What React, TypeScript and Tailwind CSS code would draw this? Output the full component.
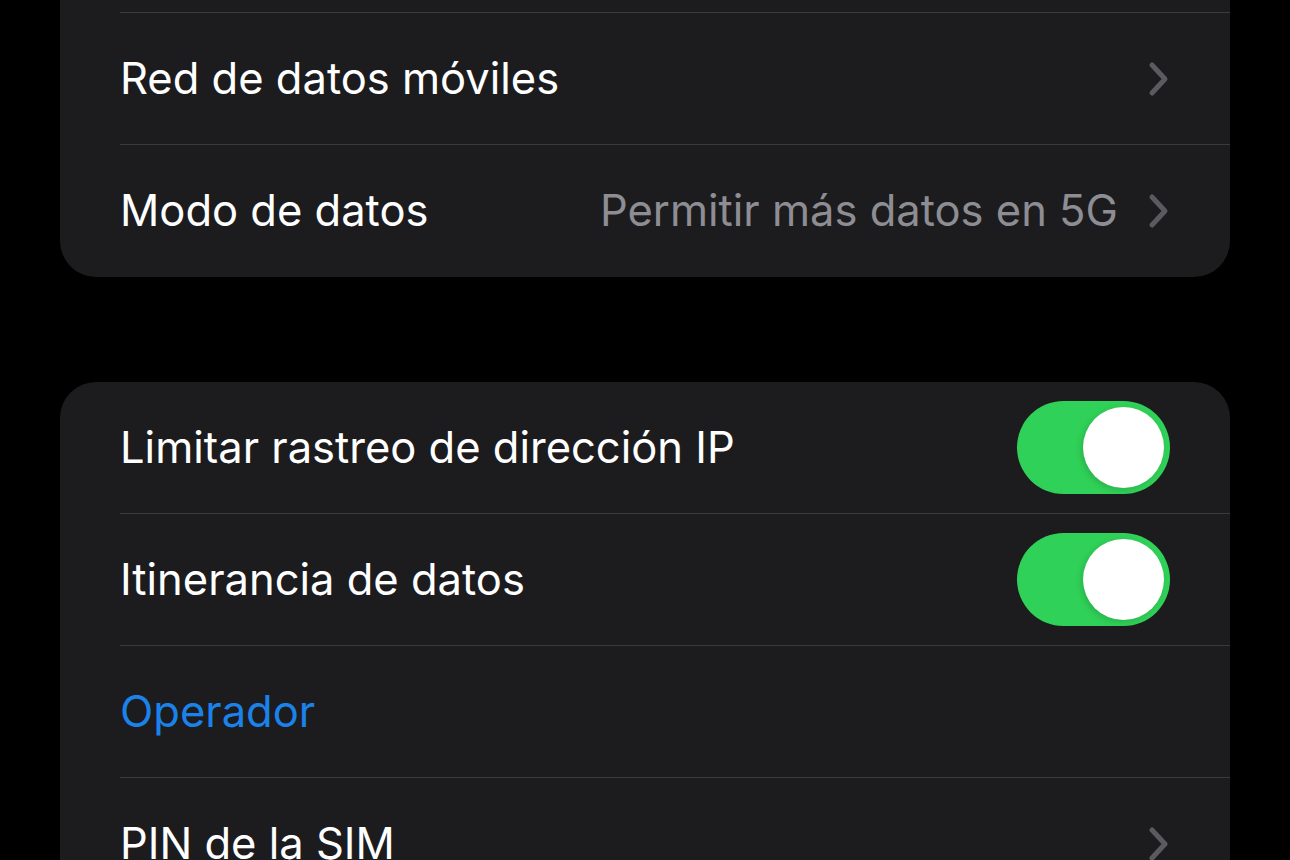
import React from "react";

const Chevron = () => (
  <svg width="22" height="36" viewBox="0 0 22 36" className="shrink-0">
    <path d="M4 4 L17 18 L4 32" fill="none" stroke="#5a5a5f" strokeWidth="5" strokeLinecap="round" strokeLinejoin="round" />
  </svg>
);

const Toggle = () => (
  <div className="relative h-[93px] w-[153px] rounded-full bg-[#30d158] shrink-0">
    <div className="absolute right-[6px] top-[6px] h-[81px] w-[81px] rounded-full bg-white shadow-[-2px_2px_6px_rgba(0,0,0,0.15)]" />
  </div>
);

type RowProps = {
  label: string;
  labelClass?: string;
  value?: string;
  chevron?: boolean;
  toggle?: boolean;
  sep?: boolean;
};

const Row = ({ label, labelClass = "text-white", value, chevron, toggle, sep = true }: RowProps) => (
  <div className="pl-[60px]">
    <div className={`flex h-[132px] items-center pr-[60px] ${sep ? "border-b border-[#3a3a3c]" : ""}`}>
      <span className={`flex-1 text-[43.5px] leading-none ${labelClass}`}>{label}</span>
      {value && <span className="mr-[30px] text-[43.5px] leading-none text-[#8d8d93]">{value}</span>}
      {chevron && <Chevron />}
      {toggle && <Toggle />}
    </div>
  </div>
);

export default function App() {
  return (
    <div
      className="h-[860px] w-[1290px] overflow-hidden bg-black px-[60px]"
      style={{ fontFamily: "Inter, 'Noto Sans', sans-serif" }}
    >
      <div className="overflow-hidden rounded-b-[36px] bg-[#1c1c1e]">
        <div className="pl-[60px]">
          <div className="h-[13px] border-b border-[#3a3a3c]" />
        </div>
        <Row label="Red de datos móviles" chevron />
        <Row label="Modo de datos" value="Permitir más datos en 5G" chevron sep={false} />
      </div>
      <div className="mt-[105px] overflow-hidden rounded-[36px] bg-[#1c1c1e]">
        <Row label="Limitar rastreo de dirección IP" toggle />
        <Row label="Itinerancia de datos" toggle />
        <Row label="Operador" labelClass="text-[#1b82ea]" />
        <Row label="PIN de la SIM" chevron sep={false} />
      </div>
    </div>
  );
}
